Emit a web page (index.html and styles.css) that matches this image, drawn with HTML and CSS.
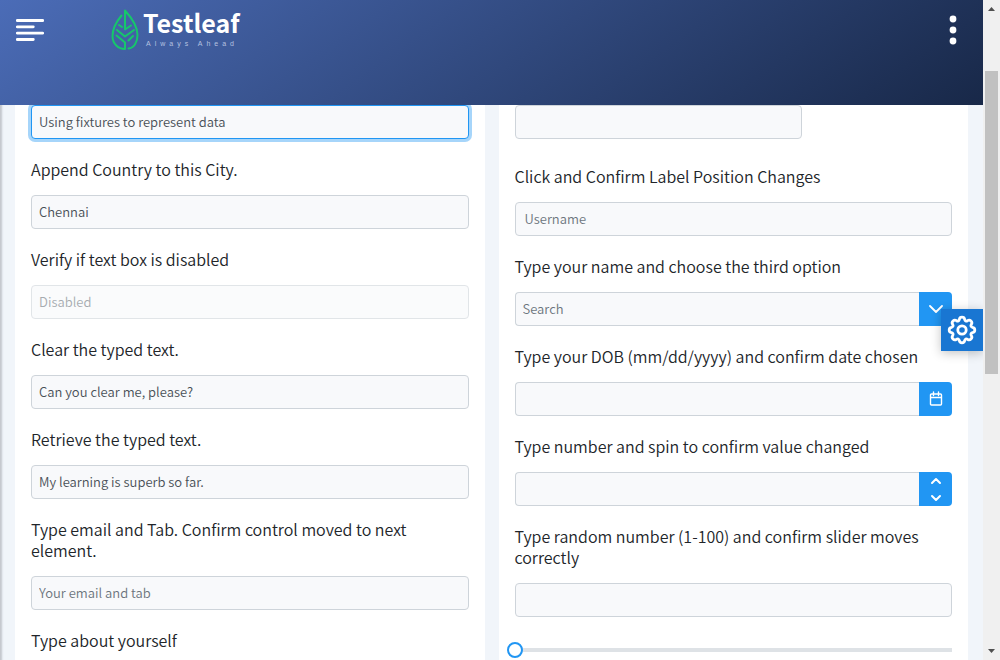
FILE: index.html
```html
<!DOCTYPE html>
<html lang="en">
<head>
<meta charset="utf-8">
<title>Testleaf - Input</title>
<link rel="stylesheet" href="styles.css">
</head>
<body>
<div class="shell">
  <div class="app">
    <header class="topbar">
      <button class="icon-btn menu-btn" type="button" aria-label="Menu">
        <svg width="28" height="22" viewBox="0 0 28 22" stroke="#fff" stroke-width="2.8" stroke-linecap="round"><path d="M1.3 1.5H26.7M1.3 7.8H17.3M1.3 14.2H26.7M1.3 20.5H17.3"/></svg>
      </button>
      <a class="logo" href="#">
        <svg width="28" height="42" viewBox="0 0 28 42" fill="none" stroke="#16c76b" stroke-width="2" stroke-linecap="round" stroke-linejoin="round"><path d="M14 21V2.500C19 8 26.500 17 26.500 27C26.500 34 23 40 17.500 40.500M10.500 7.500C6 13 1.500 20 1.500 28C1.500 36 7.500 41 14 41V34.500L5.500 27.500M8 17L11 19M20 17.500L14 21.500M6 22L14 28.500L23 22M22 28L17.500 32.500"/></svg>
        <span class="brand"><span class="brand-name">Testleaf</span><span class="brand-tag">Always Ahead</span></span>
      </a>
      <button class="icon-btn more-btn" type="button" aria-label="More">
        <svg width="8" height="30" viewBox="0 0 8 30" fill="#fff"><circle cx="4" cy="4" r="3.400"/><circle cx="4" cy="15" r="3.400"/><circle cx="4" cy="26" r="3.400"/></svg>
      </button>
    </header>

    <main class="content">
      <section class="card">
        <input class="text-input focused" type="text" aria-label="Name" value="Using fixtures to represent data">
        <label class="title" for="city">Append Country to this City.</label>
        <input class="text-input" id="city" type="text" value="Chennai">
        <label class="title" for="off">Verify if text box is disabled</label>
        <input class="text-input" id="off" type="text" placeholder="Disabled" disabled>
        <label class="title" for="clear">Clear the typed text.</label>
        <input class="text-input" id="clear" type="text" value="Can you clear me, please?">
        <label class="title" for="typed">Retrieve the typed text.</label>
        <input class="text-input" id="typed" type="text" value="My learning is superb so far.">
        <label class="title" for="email">Type email and Tab. Confirm control moved to next element.</label>
        <input class="text-input" id="email" type="email" placeholder="Your email and tab">
        <span class="title">Type about yourself</span>
      </section>

      <section class="card">
        <input class="text-input short" type="text" aria-label="Age">
        <label class="title spaced" for="user">Click and Confirm Label Position Changes</label>
        <input class="text-input float-input" id="user" type="text" placeholder="Username">
        <label class="title" for="option">Type your name and choose the third option</label>
        <div class="group">
          <input class="text-input" id="option" type="text" placeholder="Search">
          <button class="group-btn" type="button" aria-label="Show options">
            <svg width="14" height="8" viewBox="0 0 14 8" fill="none" stroke="#fff" stroke-width="1.800" stroke-linecap="round" stroke-linejoin="round"><path d="M1 1L7 7L13 1"/></svg>
          </button>
        </div>
        <label class="title" for="dob">Type your DOB (mm/dd/yyyy) and confirm date chosen</label>
        <div class="group">
          <input class="text-input" id="dob" type="text">
          <button class="group-btn" type="button" aria-label="Choose date">
            <svg width="14" height="16" viewBox="0 0 14 16" fill="none" stroke="#fff" stroke-width="1.400" stroke-linecap="round" stroke-linejoin="round"><path d="M2.500 3H11.500Q12.500 3 12.500 4V13Q12.500 14 11.500 14H2.500Q1.500 14 1.500 13V4Q1.500 3 2.500 3ZM1.500 6.500H12.500M4.500 1V4.500M9.500 1V4.500"/></svg>
          </button>
        </div>
        <label class="title" for="spin">Type number and spin to confirm value changed</label>
        <div class="group">
          <input class="text-input" id="spin" type="text">
          <div class="spinner">
            <button class="spin-btn" type="button" aria-label="Increase">
              <svg width="12" height="8" viewBox="0 0 12 8" fill="none" stroke="#fff" stroke-width="2" stroke-linecap="round" stroke-linejoin="round"><path d="M2 6L6 2L10 6"/></svg>
            </button>
            <button class="spin-btn" type="button" aria-label="Decrease">
              <svg width="12" height="8" viewBox="0 0 12 8" fill="none" stroke="#fff" stroke-width="2" stroke-linecap="round" stroke-linejoin="round"><path d="M2 2L6 6L10 2"/></svg>
            </button>
          </div>
        </div>
        <label class="title" for="num">Type random number (1-100) and confirm slider moves correctly</label>
        <input class="text-input" id="num" type="text">
        <input class="slider" type="range" min="0" max="100" value="0" aria-label="Number">
      </section>
    </main>

    <button class="config" type="button" aria-label="Settings">
      <svg width="30" height="30" viewBox="0 0 30 30" fill="none" stroke="#fff" stroke-width="2.800" stroke-linejoin="round"><circle cx="15" cy="15" r="4.200"/><path d="M12.300 4.500Q12.700 2.200 15 2.200T17.700 4.500Q18.400 6.900 20.500 5.700Q22.400 4.400 24 6T24.300 9.500Q23.100 11.600 25.500 12.300Q27.800 12.700 27.800 15T25.500 17.700Q23.100 18.400 24.300 20.500Q25.600 22.400 24 24T20.500 24.300Q18.400 23.100 17.700 25.500Q17.300 27.800 15 27.800T12.300 25.500Q11.600 23.100 9.500 24.300Q7.600 25.600 6 24T5.700 20.500Q6.900 18.400 4.500 17.700Q2.200 17.300 2.200 15T4.500 12.300Q6.900 11.600 5.700 9.500Q4.400 7.600 6 6T9.500 5.700Q11.600 6.900 12.300 4.500Z"/></svg>
    </button>
  </div>

  <div class="scrollbar">
    <svg width="7" height="4" viewBox="0 0 7 4" fill="#505050"><path d="M0 4L3.500 0L7 4Z"/></svg>
    <div class="scroll-track"><div class="scroll-thumb"></div></div>
    <svg width="7" height="4" viewBox="0 0 7 4" fill="#505050"><path d="M0 0L3.500 4L7 0Z"/></svg>
  </div>
</div>
</body>
</html>
```

FILE: styles.css
```css
* {
  box-sizing: border-box;
}

body {
  margin: 0;
  background: #f1f5fa;
  font-family: "Noto Sans CJK SC", "Open Sans", sans-serif;
  font-size: 13px;
  color: #212529;
}

button,
input {
  margin: 0;
  font: inherit;
}

button {
  display: flex;
  align-items: center;
  justify-content: center;
  padding: 0;
  border: 0;
  background: none;
  cursor: pointer;
}

.shell {
  display: flex;
  height: 100vh;
  overflow: hidden;
}

.app {
  position: relative;
  flex: 1;
  min-width: 0;
  display: flex;
  flex-direction: column;
  overflow: hidden;
}

.topbar {
  position: relative;
  z-index: 1;
  flex: none;
  display: flex;
  align-items: flex-start;
  height: 105px;
  padding: 8px 24px 0 16px;
  background: linear-gradient(145deg, #4b6cb7, #182848);
}

.icon-btn {
  height: 44px;
}

.logo {
  display: flex;
  gap: 4px;
  margin-left: 67px;
  color: #fff;
  text-decoration: none;
}

.brand {
  display: flex;
  flex-direction: column;
}

.brand-name {
  font-size: 25px;
  font-weight: 700;
  line-height: 28px;
}

.brand-tag {
  padding-left: 3px;
  font-family: "Liberation Sans", sans-serif;
  font-size: 7px;
  line-height: 16px;
  letter-spacing: 4px;
  color: #b5c2e0;
}

.more-btn {
  margin-left: auto;
  padding: 0 2px;
}

.content {
  flex: 1;
  display: grid;
  grid-template-columns: 1fr 1fr;
  gap: 14px;
  padding: 0 15px;
  box-shadow: inset 3px 0 2px -1px #c3c7cd;
}

.card {
  display: flex;
  flex-direction: column;
  min-width: 0;
  padding: 0 16px;
  background: #fff;
}

.title {
  margin: 20px 0 15px;
  font-size: 16px;
  font-weight: 350;
  line-height: 21px;
}

.spaced {
  margin-top: 27px;
}

.text-input {
  width: 100%;
  height: 34px;
  flex: none;
  padding: 0 7px 2px;
  border: 1px solid #ced4da;
  border-radius: 4px;
  background: #f8f9fb;
  color: #495057;
  font-weight: 350;
  outline: none;
}

.text-input::placeholder {
  color: #6c757d;
  opacity: 1;
}

.text-input:disabled {
  opacity: 0.6;
}

.focused {
  border-color: #2196f3;
  box-shadow: 0 0 0 3px #a6d5fa;
}

.short {
  width: 287px;
}

.float-input {
  padding: 0 9px 2px;
}

.group {
  display: flex;
}

.group .text-input {
  flex: 1;
  min-width: 0;
  border-right: 0;
  border-radius: 4px 0 0 4px;
}

.group-btn,
.spinner {
  width: 33px;
  height: 34px;
  border-radius: 0 4px 4px 0;
  background: #2196f3;
}

.spinner {
  display: flex;
  flex-direction: column;
}

.spin-btn {
  flex: 1;
}

.slider {
  appearance: none;
  width: 100%;
  height: 16px;
  margin-top: 25px;
  background: linear-gradient(#dee2e6, #dee2e6) center / 100% 4px no-repeat;
  outline: none;
}

.slider::-webkit-slider-thumb {
  appearance: none;
  width: 16px;
  height: 16px;
  margin-left: -8px;
  border: 2px solid #2196f3;
  border-radius: 50%;
  background: #fff;
}

.config {
  position: absolute;
  z-index: 2;
  top: 309px;
  right: 0;
  width: 42px;
  height: 42px;
  background: #1976d2;
  box-shadow: 0 2px 10px rgba(0, 0, 0, 0.24);
}

.scrollbar {
  flex: none;
  display: flex;
  flex-direction: column;
  align-items: center;
  gap: 7px;
  width: 17px;
  padding: 7px 2px;
  background: #f0f0f0;
}

.scroll-track {
  flex: 1;
  width: 13px;
  padding-top: 53px;
}

.scroll-thumb {
  height: 53%;
  background: #c1c1c1;
}
```
